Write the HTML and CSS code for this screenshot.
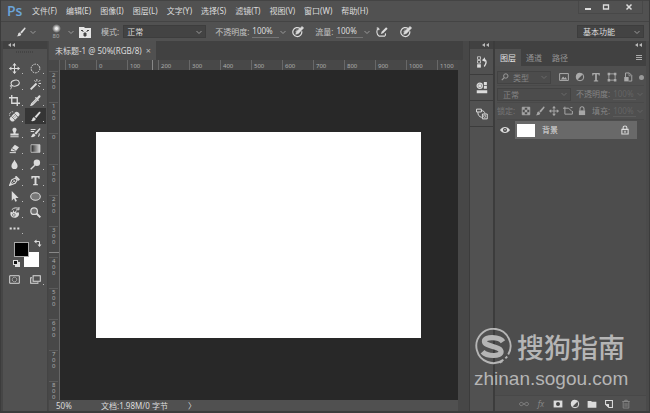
FILE: index.html
```html
<!DOCTYPE html>
<html lang="zh-CN">
<head>
<meta charset="utf-8">
<title>未标题-1 @ 50%(RGB/8)</title>
<link rel="stylesheet" href="styles.css">
</head>
<body>
<svg class="sprite" aria-hidden="true">
  <symbol id="chev" viewBox="0 0 8 8"><path d="M1.500 3 4 5.500 6.500 3" fill="none" stroke="currentColor"/></symbol>
  <symbol id="collapse" viewBox="0 0 8 6"><path d="M4 1v4L1 3zM8 1v4L5 3z" fill="currentColor"/></symbol>
  <symbol id="brush" viewBox="0 0 16 16"><path d="M14.800 1.200c.8.700.6 1.300.1 2L9.200 10.300 6.700 8.200l6.300-6.700c.6-.6 1.200-.8 1.800-.3zM6 9l2.400 2.200c0 2.800-3.400 4-7.200 3.400 2-.9 1.800-1.800 2.200-3.300C3.800 9.800 4.800 8.900 6 9z" fill="currentColor"/></symbol>
  <symbol id="panelbrush" viewBox="0 0 12 12"><path d="M0 1h5l1 1h6v10H0z" fill="#e4e4e4"/><path d="M2 4.500h2M8 4.500h2M3 4.500l1.500 1.500M9 4.500 7.500 6M5 7h2v3H5z" stroke="#444" fill="#444"/></symbol>
  <symbol id="pressure" viewBox="0 0 16 16"><path d="M11 3.500A6 6 0 1 0 13 7" fill="none" stroke="currentColor" stroke-width="1.600"/><path d="m5 11 1-3.500L13.500.500l2 2L8.500 10zM5.200 5.500h4M4.500 7.500h2" fill="currentColor" stroke="currentColor" stroke-width=".8"/></symbol>
  <symbol id="airbrush" viewBox="0 0 16 16"><path d="M3.500 3C0 5 .5 11 4 13.500h7.500c1.500-1 1.500-2.500.5-3.500M3.500 3 1 2.500M3.500 3 4 5.500" fill="none" stroke="currentColor" stroke-width="1.500"/><path d="m6.500 10.500 1-3 6-6 2 2-6 6z" fill="currentColor"/></symbol>
  <symbol id="move" viewBox="0 0 16 16"><path d="M8 1v14M1 8h14" stroke="currentColor" stroke-width="1.500"/><path d="m8 0 3 3.500H5zM8 16l3-3.500H5zM0 8l3.500-3v6zM16 8l-3.500-3v6z" fill="currentColor"/></symbol>
  <symbol id="marquee" viewBox="0 0 16 16"><circle cx="8" cy="8" r="6.300" fill="none" stroke="currentColor" stroke-width="1.400" stroke-dasharray="2.500 1.400"/></symbol>
  <symbol id="lasso" viewBox="0 0 16 16"><ellipse cx="9" cy="6" rx="6" ry="4.200" transform="rotate(-12 9 6)" fill="none" stroke="currentColor" stroke-width="1.500"/><path d="M4.500 9c-2-1-3.500 1-2 2.200C4 12 5.500 9.500 4.200 9M3 11.500c1 1 .5 2.500-1 3" fill="none" stroke="currentColor" stroke-width="1.300"/></symbol>
  <symbol id="wand" viewBox="0 0 16 16"><path d="M1 15 9.500 6.500" stroke="currentColor" stroke-width="2.800"/><path d="M10 0v3.500M12.500 4 15 1.500M12.500 6.500H16M12 9l2 2.500M6.500 2 8 4" stroke="currentColor" stroke-width="1.400"/></symbol>
  <symbol id="crop" viewBox="0 0 16 16"><path d="M4 0v12h12M0 4h12v12" fill="none" stroke="currentColor" stroke-width="1.900"/></symbol>
  <symbol id="dropper" viewBox="0 0 16 16"><path d="m9 6-6.500 6.500L1.500 15l2.300-.9L10.500 7.500" fill="none" stroke="currentColor" stroke-width="1.800"/><path d="m7 4 1.700-1 1.300 1 2-2.500c2-2.300 4.500 0 2.500 2.200L12 6l1 1.500L11.800 9.200z" fill="currentColor"/></symbol>
  <symbol id="heal" viewBox="0 0 16 16"><g transform="rotate(-45 8 8)"><rect x="0" y="4.500" width="16" height="7.500" rx="3" fill="currentColor"/><path d="M5 4.500V12M11 4.500V12" stroke="#535353"/><path d="M6.500 7h1M8.500 7h1M6.500 9.500h1M8.500 9.500h1" stroke="#535353" stroke-width="1.200"/></g><path d="M1 7C0 3 3 0 7 1.500" fill="none" stroke="currentColor" stroke-width="1.200" stroke-dasharray="1.500 1"/></symbol>
  <symbol id="stamp" viewBox="0 0 16 16"><path d="M6.500 8C6 6.500 4.800 5.500 5 3.700 5.200 0 10.800 0 11 3.700c.2 1.800-1 2.800-1.500 4.300v1.500H14v3H2v-3h4.500zM2 13.500h12V15H2z" fill="currentColor"/></symbol>
  <symbol id="history" viewBox="0 0 16 16"><path d="M15.500 3 9 11 6.500 9 14 1.500zM5.500 9.500l2.500 2.200c-.5 2.500-3.500 3.500-7 3 1.800-1 2-5 4.500-5.200z" fill="currentColor"/><path d="M1 3.500h7M1 6.500h5M13 9c1 1.500.5 3.500-1 5" fill="none" stroke="currentColor" stroke-width="1.500"/></symbol>
  <symbol id="eraser" viewBox="0 0 16 16"><path d="m8.500 2.500 6 3.500-5 6.500-7-1 1-3z" fill="currentColor"/><path d="m4 8 5.500 3" stroke="#535353" stroke-width="1.200"/><path d="M1 14h9" stroke="currentColor" stroke-width="1.500"/></symbol>
  <linearGradient id="fade"><stop stop-color="#222"/><stop offset="1" stop-color="#ddd"/></linearGradient>
  <symbol id="gradient" viewBox="0 0 16 16"><path d="M1.500 2.500h13v11h-13z" fill="url(#fade)" stroke="#ccc" stroke-width="1.200"/></symbol>
  <symbol id="drop" viewBox="0 0 16 16"><path d="M8 1c1 3 4.500 5.500 4.500 9a4.500 4.500 0 0 1-9 0C3.500 6.500 7 4 8 1z" fill="currentColor"/></symbol>
  <symbol id="dodge" viewBox="0 0 16 16"><circle cx="10" cy="5.500" r="4.700" fill="currentColor"/><path d="M7 9 1 15" stroke="currentColor" stroke-width="2"/></symbol>
  <symbol id="pen" viewBox="0 0 16 16"><path d="M1 15 4 7l5-2.500 3 3L9 12z" fill="none" stroke="currentColor" stroke-width="1.700"/><path d="m1 15 5.500-5.500M9 3l5 5 1.500-1.500-5-5z" fill="currentColor" stroke="currentColor"/><circle cx="7.500" cy="8.800" r="1.300" fill="currentColor"/></symbol>
  <symbol id="type" viewBox="0 0 16 16"><path d="M2 1.500h12V5.500h-1.500L11.800 3.500H9.400v9.700l2.100.3V15h-7v-1.500l2.100-.3V3.500H4.200L3.500 5.500H2z" fill="currentColor"/></symbol>
  <symbol id="arrow" viewBox="0 0 16 16"><path d="M4 0v14l3.200-3.200 2 4.700 2.300-1-2-4.500H14z" fill="currentColor"/></symbol>
  <symbol id="ellipse" viewBox="0 0 16 16"><ellipse cx="8" cy="8" rx="7" ry="5.500" fill="#777" stroke="currentColor" stroke-width="1.500"/></symbol>
  <symbol id="rotate" viewBox="0 0 16 16"><path d="M2 6.500 5.500 8l.5-4 2 3.500 3.500-3-1.500 4 4-1c2 4-1 8-6 8-5 0-7-4.500-5.500-9z" fill="currentColor"/><path d="M4 4C7 .5 11 1 14 2M14.500 0v4h-4" fill="none" stroke="currentColor" stroke-width="1.400"/><circle cx="7" cy="11.500" r="2" fill="none" stroke="#555"/></symbol>
  <symbol id="zoom" viewBox="0 0 16 16"><circle cx="6" cy="6" r="4.800" fill="#707070" stroke="currentColor" stroke-width="1.700"/><path d="m9.500 9.500 5.500 5.500" stroke="currentColor" stroke-width="2.800"/></symbol>
  <symbol id="dots" viewBox="0 0 16 16"><path d="M1 6.500h3v3H1zM6.500 6.500h3v3h-3zM12 6.500h3v3h-3z" fill="currentColor"/></symbol>
  <symbol id="swap" viewBox="0 0 8 8"><path d="M2 2.500h3.500V6" fill="none" stroke="currentColor"/><path d="M0 2.500 2.500.500v4zM5.500 8l-2-2.500h4z" fill="currentColor"/></symbol>
  <symbol id="mask" viewBox="0 0 16 16"><path d="M1 2.500h14v11H1z" fill="none" stroke="currentColor" stroke-width="1.400"/><circle cx="8" cy="8" r="3.300" fill="none" stroke="currentColor" stroke-width="1.200" stroke-dasharray="1.500 .8"/></symbol>
  <symbol id="screen" viewBox="0 0 16 16"><path d="M4.500 2.500H15v8H4.500z" fill="none" stroke="currentColor" stroke-width="1.500"/><path d="M3 5.500H1v8h10.500V12" fill="none" stroke="currentColor" stroke-width="1.500"/></symbol>
  <symbol id="hist-panel" viewBox="0 0 16 16"><path d="M2 1h4v3.500H2zM2 6h4v3.500H2z" fill="none" stroke="currentColor"/><path d="M1.500 11h5v4.500h-5z" fill="currentColor"/><path d="M9 5.500h3.500c2 3 .5 6-1.500 8.500" fill="none" stroke="currentColor" stroke-width="1.800"/><path d="m8 5.500 4-4v6z" fill="currentColor"/></symbol>
  <symbol id="adjust-panel" viewBox="0 0 16 16"><circle cx="5" cy="5" r="3.500" fill="none" stroke="currentColor" stroke-width="1.600"/><path d="M3 3h4v4H3zM10.500 0h4v4h-4zM10.500 5h4v4h-4zM1 11h14v4H1z" fill="currentColor"/></symbol>
  <symbol id="char-panel" viewBox="0 0 16 16"><path d="M.7 1.500h6.500v3.800H.7zM2.500 5.500c0 4 1.500 6 5 7M7 3.500c3 0 4.500 1.500 5 4M8.500 8h6.500v6.500H8.500z" fill="none" stroke="currentColor" stroke-width="1.300"/><circle cx="11.500" cy="11" r="1.500" fill="none" stroke="currentColor"/></symbol>
  <symbol id="menu" viewBox="0 0 8 8"><path d="M1 1.500h6M1 3.500h6M1 5.500h6" stroke="currentColor"/></symbol>
  <symbol id="search" viewBox="0 0 8 8"><circle cx="4.800" cy="3" r="2.200" fill="none" stroke="currentColor"/><path d="M3.200 4.600 .8 7.200" stroke="currentColor" stroke-width="1.200"/></symbol>
  <symbol id="image" viewBox="0 0 16 16"><path d="M1 2.500h14v11H1z" fill="none" stroke="currentColor" stroke-width="1.600"/><path d="m3 12 3.500-5L9 10l1.500-2 2.500 4z" fill="currentColor"/></symbol>
  <symbol id="half" viewBox="0 0 16 16"><circle cx="8" cy="8" r="6" fill="none" stroke="currentColor" stroke-width="1.600"/><path d="M12.200 3.800A6 6 0 1 0 3.800 12.200z" fill="currentColor"/></symbol>
  <symbol id="shape" viewBox="0 0 16 16"><path d="M3 3h10v10H3z" fill="none" stroke="currentColor" stroke-width="1.400"/><path d="M1 1h4v4H1zM11 1h4v4h-4zM1 11h4v4H1zM11 11h4v4h-4z" fill="currentColor"/></symbol>
  <symbol id="smart" viewBox="0 0 16 16"><path d="M4 8V1.500h6l4 4v9H9" fill="none" stroke="currentColor" stroke-width="1.500"/><path d="M2 8h7v7H2z" fill="currentColor"/><path d="M9.500 2v4h4" fill="none" stroke="currentColor"/></symbol>
  <symbol id="checker" viewBox="0 0 16 16"><path d="M2 2h12v12H2z" fill="none" stroke="currentColor" stroke-width="1.400"/><path d="M2 2h4v4H2zM10 2h4v4h-4zM6 6h4v4H6zM2 10h4v4H2zM10 10h4v4h-4z" fill="currentColor"/></symbol>
  <symbol id="artboard" viewBox="0 0 16 16"><path d="M0 3.500h9M3 1v12h12V8M9 3.500l5 5M12 2.500h3" fill="none" stroke="currentColor" stroke-width="1.600"/></symbol>
  <symbol id="lock" viewBox="0 0 16 16"><path d="M4.800 7V4.500a3.200 3.200 0 0 1 6.400 0V7" fill="none" stroke="currentColor" stroke-width="1.700"/><path d="M3 7h10v7.500H3z" fill="currentColor"/></symbol>
  <symbol id="lock-line" viewBox="0 0 16 16"><path d="M5 7V4.500a3 3 0 0 1 6 0V7M3 7h10v7.500H3z" fill="none" stroke="currentColor" stroke-width="1.700"/><path d="M7 9h2v3.500H7z" fill="currentColor"/></symbol>
  <symbol id="eye" viewBox="0 0 16 16"><path d="M0 8c4-6.500 12-6.500 16 0-4 6.500-12 6.500-16 0z" fill="currentColor"/><circle cx="8" cy="8" r="3.200" fill="#444"/><circle cx="8" cy="7.500" r="1.200" fill="currentColor"/></symbol>
  <symbol id="link" viewBox="0 0 16 16"><path d="M7 8c-1-3.500-6-3.500-6 0s5 3.500 6 0h2c1-3.500 6-3.500 6 0s-5 3.500-6 0" fill="none" stroke="currentColor" stroke-width="1.600"/></symbol>
  <symbol id="addmask" viewBox="0 0 16 16"><path d="M1 2.500h14v11H1z" fill="currentColor"/><circle cx="8" cy="8" r="3.200" fill="#444"/></symbol>
  <symbol id="folder" viewBox="0 0 16 16"><path d="M1 3h5.500L8 4.500h7V14H1z" fill="currentColor"/></symbol>
  <symbol id="newlayer" viewBox="0 0 16 16"><path d="M2.500 2.500h11v11H8l-5.500-5z" fill="none" stroke="currentColor" stroke-width="1.700"/><path d="M2 8h6v6z" fill="currentColor"/></symbol>
  <symbol id="trash" viewBox="0 0 16 16"><path d="M2 4h12M6 4V2h4v2M3.500 5v9.500h9V5M6.500 6.500v6M9.500 6.500v6" fill="none" stroke="currentColor" stroke-width="1.500"/></symbol>
</svg>

<div class="app">
  <header class="menubar">
    <span class="logo">Ps</span>
    <nav class="menus">
      <a href="#">文件(F)</a><a href="#">编辑(E)</a><a href="#">图像(I)</a><a href="#">图层(L)</a><a href="#">文字(Y)</a><a href="#">选择(S)</a><a href="#">滤镜(T)</a><a href="#">视图(V)</a><a href="#">窗口(W)</a><a href="#">帮助(H)</a>
    </nav>
    <div class="window-buttons">
      <button aria-label="最小化"><svg viewBox="0 0 8 8"><path d="M1 6h6" stroke="currentColor" stroke-width="2"/></svg></button>
      <button aria-label="最大化"><svg viewBox="0 0 8 8"><path d="M1.500 2h5v4h-5z" fill="none" stroke="currentColor" stroke-width="1.300"/></svg></button>
      <button class="close" aria-label="关闭"><svg viewBox="0 0 8 8"><path d="m1.500 1.500 5 5m0-5-5 5" stroke="currentColor" stroke-width="1.500"/></svg></button>
    </div>
  </header>

  <div class="options">
    <button class="preset" aria-label="画笔工具"><svg class="i10"><use href="#brush"/></svg><svg class="i8 dim"><use href="#chev"/></svg></button>
    <button class="tip" aria-label="画笔大小"><span class="tip-size"><i></i>80</span><svg class="i8 dim"><use href="#chev"/></svg></button>
    <button class="brush-panel" aria-label="画笔面板"><svg class="i12"><use href="#panelbrush"/></svg></button>
    <label for="mode">模式:</label>
    <span class="select mode"><select id="mode"><option>正常</option></select><svg class="i8"><use href="#chev"/></svg></span>
    <label for="opacity">不透明度:</label>
    <span class="amount"><input id="opacity" value="100%"><svg class="i8 dim"><use href="#chev"/></svg></span>
    <button aria-label="不透明度压力"><svg class="i12"><use href="#pressure"/></svg></button>
    <label class="flow" for="flow">流量:</label>
    <span class="amount"><input id="flow" value="100%"><svg class="i8 dim"><use href="#chev"/></svg></span>
    <button aria-label="喷枪"><svg class="i12"><use href="#airbrush"/></svg></button>
    <button class="size-pressure" aria-label="大小压力"><svg class="i12"><use href="#pressure"/></svg></button>
    <span class="select workspace"><select aria-label="工作区"><option>基本功能</option></select><svg class="i8"><use href="#chev"/></svg></span>
  </div>

  <main class="workspace-area">
    <aside class="tools">
      <div class="strip"><svg><use href="#collapse"/></svg></div>
      <div class="grip"></div>
      <div class="tool-grid">
        <button aria-label="移动"><svg><use href="#move"/></svg></button>
        <button aria-label="选框"><svg><use href="#marquee"/></svg></button>
        <button aria-label="套索"><svg><use href="#lasso"/></svg></button>
        <button aria-label="魔棒"><svg><use href="#wand"/></svg></button>
        <button aria-label="裁剪"><svg><use href="#crop"/></svg></button>
        <button aria-label="吸管"><svg><use href="#dropper"/></svg></button>
        <button aria-label="修复画笔"><svg><use href="#heal"/></svg></button>
        <button class="active" aria-label="画笔"><svg><use href="#brush"/></svg></button>
        <button aria-label="仿制图章"><svg><use href="#stamp"/></svg></button>
        <button aria-label="历史记录画笔"><svg><use href="#history"/></svg></button>
        <button aria-label="橡皮擦"><svg><use href="#eraser"/></svg></button>
        <button aria-label="渐变"><svg><use href="#gradient"/></svg></button>
        <button aria-label="模糊"><svg><use href="#drop"/></svg></button>
        <button aria-label="减淡"><svg><use href="#dodge"/></svg></button>
        <button aria-label="钢笔"><svg><use href="#pen"/></svg></button>
        <button aria-label="横排文字"><svg><use href="#type"/></svg></button>
        <button aria-label="路径选择"><svg><use href="#arrow"/></svg></button>
        <button aria-label="椭圆"><svg><use href="#ellipse"/></svg></button>
        <button aria-label="旋转视图"><svg><use href="#rotate"/></svg></button>
        <button class="single" aria-label="缩放"><svg><use href="#zoom"/></svg></button>
        <button aria-label="编辑工具栏"><svg><use href="#dots"/></svg></button>
      </div>
      <div class="colors">
        <button class="back" aria-label="背景色"></button>
        <button class="front" aria-label="前景色"></button>
        <button class="swap" aria-label="切换颜色"><svg class="i8"><use href="#swap"/></svg></button>
        <button class="reset" aria-label="默认颜色"></button>
      </div>
      <div class="tool-grid">
        <button class="single" aria-label="快速蒙版"><svg><use href="#mask"/></svg></button>
        <button aria-label="屏幕模式"><svg><use href="#screen"/></svg></button>
      </div>
    </aside>

    <section class="document">
      <div class="doc-tabs"><div class="doc-tab"><span>未标题-1 @ 50%(RGB/8)</span><button aria-label="关闭文档">×</button></div></div>
      <div class="editor">
        <div class="corner"></div>
        <div class="ruler-x"><span>100</span><span>0</span><span class="cursor">100</span><span>200</span><span>300</span><span>400</span><span>500</span><span>600</span><span>700</span><span>800</span><span>900</span><span>1000</span><span>1100</span></div>
        <div class="ruler-y"><span>200</span><span>100</span><span>0</span><span>100</span><span>200</span><span class="cursor">300</span><span>400</span><span>500</span><span>600</span><span>700</span><span>800</span></div>
        <div class="pasteboard"><div class="canvas"></div></div>
      </div>
      <footer class="status"><span class="percent">50%</span><span>文档:1.98M/0 字节</span><button aria-label="状态选项">〉</button></footer>
    </section>

    <aside class="dock">
      <div class="strip right"><svg><use href="#collapse"/></svg></div>
      <button aria-label="历史记录"><svg><use href="#hist-panel"/></svg></button>
      <button aria-label="调整"><svg><use href="#adjust-panel"/></svg></button>
      <button aria-label="库"><svg><use href="#char-panel"/></svg></button>
    </aside>

    <aside class="panels">
      <div class="strip right"><svg><use href="#collapse"/></svg></div>
      <div class="panel-tabs"><button class="on">图层</button><button>通道</button><button>路径</button><button class="panel-menu" aria-label="面板菜单"><svg class="i8"><use href="#menu"/></svg></button></div>
      <div class="layer-controls">
        <div class="row">
          <span class="select filter"><svg class="i8 glass"><use href="#search"/></svg><select aria-label="筛选类型" disabled><option>类型</option></select><svg class="i8"><use href="#chev"/></svg></span>
          <div class="filters">
            <button aria-label="像素图层"><svg class="i10"><use href="#image"/></svg></button>
            <button aria-label="调整图层"><svg class="i10"><use href="#half"/></svg></button>
            <button aria-label="文字图层"><svg class="i10"><use href="#type"/></svg></button>
            <button aria-label="形状图层"><svg class="i10"><use href="#shape"/></svg></button>
            <button aria-label="智能对象"><svg class="i10"><use href="#smart"/></svg></button>
            <button class="toggle" aria-label="筛选开关"></button>
          </div>
        </div>
        <div class="row">
          <span class="select blend"><select aria-label="混合模式" disabled><option>正常</option></select><svg class="i8"><use href="#chev"/></svg></span>
          <label for="lo">不透明度:</label>
          <span class="amount"><input id="lo" value="100%" disabled><svg class="i8"><use href="#chev"/></svg></span>
        </div>
        <div class="row">
          <span class="lock-label">锁定:</span>
          <div class="locks">
            <button aria-label="锁定透明像素"><svg class="i10"><use href="#checker"/></svg></button>
            <button aria-label="锁定图像像素"><svg class="i10"><use href="#brush"/></svg></button>
            <button aria-label="锁定位置"><svg class="i10"><use href="#move"/></svg></button>
            <button aria-label="锁定画板"><svg class="i10"><use href="#artboard"/></svg></button>
            <button aria-label="锁定全部"><svg class="i10"><use href="#lock"/></svg></button>
          </div>
          <label for="lf">填充:</label>
          <span class="amount"><input id="lf" value="100%" disabled><svg class="i8"><use href="#chev"/></svg></span>
        </div>
      </div>
      <div class="layers">
        <div class="layer">
          <button class="visible" aria-label="可见性"><svg class="i10"><use href="#eye"/></svg></button>
          <div class="layer-body"><span class="thumb"></span><span>背景</span><svg class="i10"><use href="#lock-line"/></svg></div>
        </div>
      </div>
      <footer class="panel-foot">
        <button class="off" aria-label="链接图层"><svg class="i10"><use href="#link"/></svg></button>
        <button class="off fx" aria-label="图层样式">fx</button>
        <button aria-label="添加蒙版"><svg class="i10"><use href="#addmask"/></svg></button>
        <button aria-label="新建调整图层"><svg class="i10"><use href="#half"/></svg></button>
        <button aria-label="新建组"><svg class="i10"><use href="#folder"/></svg></button>
        <button aria-label="新建图层"><svg class="i10"><use href="#newlayer"/></svg></button>
        <button class="off" aria-label="删除图层"><svg class="i10"><use href="#trash"/></svg></button>
      </footer>
    </aside>
  </main>

  <div class="watermark">
    <div class="brand">
      <svg viewBox="0 0 40 40" aria-hidden="true"><path d="M31 33.500A18 18 0 1 1 36 28M27 36.500l3-1.500M33 32l2-2" fill="none" stroke="currentColor" stroke-width="2"/><path d="M30.500 14.500C27 9 11 8.500 11 14c0 6 17.500 5 17.500 11 0 5.500-15 5-19.500 0" fill="none" stroke="currentColor" stroke-width="5.500"/></svg>
      <span>搜狗指南</span>
    </div>
    <div class="site">zhinan.sogou.com</div>
  </div>
</div>
</body>
</html>
```

FILE: styles.css
```css
* { box-sizing: border-box; }
body {
  margin: 0;
  font: 8px/12px "Noto Sans", "Noto Sans CJK SC", sans-serif;
  color: #dcdcdc;
  background: #383838;
}
button, input, select {
  appearance: none;
  margin: 0;
  padding: 0;
  border: 0;
  border-radius: 0;
  background: none;
  color: inherit;
  font: inherit;
}
button { display: flex; align-items: center; justify-content: center; }
a { color: inherit; text-decoration: none; }
label { white-space: nowrap; }
svg { display: block; flex: none; }
.sprite { position: absolute; width: 0; height: 0; }
.i8 { width: 8px; height: 8px; }
.i10 { width: 10px; height: 10px; }
.i12 { width: 12px; height: 12px; }
.dim { color: #999; }

.app {
  position: relative;
  display: flex;
  flex-direction: column;
  height: 100vh;
  padding: 0 1px 2px;
  background: #3c3c3c;
}

.menubar {
  display: flex;
  align-items: center;
  height: 21px;
  padding: 0 6px;
  background: #515151;
  border-top: 1px solid #444;
}
.logo { width: 25px; color: #6ba4d9; font: 600 14px/18px "Open Sans", sans-serif; }
.menus { display: flex; gap: 9px; }
.window-buttons { display: flex; align-self: flex-start; margin-left: auto; border: 1px solid #484848; border-top: 0; }
.window-buttons button { width: 18px; height: 12px; }
.window-buttons .close { width: 27px; }
.window-buttons svg { width: 8px; height: 8px; }

.options {
  display: flex;
  align-items: center;
  height: 20px;
  padding: 0 5px 0 15px;
  background: #515151;
  border-top: 1px solid #444;
}
.options label { color: #c4c4c4; }
.preset { gap: 3px; }
.tip { gap: 4px; margin-left: 12px; }
.tip-size { display: flex; flex-direction: column; align-items: center; width: 14px; font-size: 6px; line-height: 7px; color: #aaa; }
.tip-size i { width: 9px; height: 9px; border-radius: 50%; background: radial-gradient(#eee 15%, #515151 70%); }
.brush-panel { margin: 0 10px 0 4px; }
.select { display: flex; align-items: center; height: 13px; background: #434343; border: 1px solid #3d3d3d; }
.select select { flex: 1; min-width: 0; height: 11px; line-height: 11px; opacity: 1; }
.select svg { margin-right: 2px; color: #999; }
.mode { width: 83px; margin: 0 9px 0 4px; padding-left: 3px; }
.amount { display: flex; align-items: center; width: 35px; margin-left: 3px; }
.amount input { flex: 1; width: 24px; height: 12px; border-bottom: 1px solid #737373; }
.options .amount { margin-right: 5px; }
.flow { margin-left: 11px; }
.size-pressure { margin-left: 12px; }
.workspace { width: 67px; margin-left: auto; padding-left: 5px; }

.workspace-area { flex: 1; display: flex; min-height: 0; }
.strip { height: 8px; padding: 1px 4px; background: #414141; color: #bbb; }
.strip svg { width: 8px; height: 6px; }
.strip.right { display: flex; justify-content: flex-end; }

.tools { width: 47px; background: #515151; border-right: 1px solid #444; border-left: 2px solid #464646; }
.grip { width: 18px; height: 2px; margin: 2px auto 7px; background: repeating-linear-gradient(90deg, #444 0 1px, #515151 1px 2px); }
.tool-grid { display: grid; grid-template-columns: 21px 21px; padding-left: 1px; }
.tool-grid button { position: relative; height: 16px; }
.tool-grid svg { width: 11px; height: 11px; }
.tool-grid button:not(.single)::after { content: ""; position: absolute; right: 2px; bottom: 2px; width: 1px; height: 1px; background: #bbb; }
.tool-grid .active { background: #353535; }
.colors { position: relative; width: 30px; height: 32px; margin: 3px 0 0 9px; }
.colors button { position: absolute; }
.colors .front { left: 2px; top: 3px; width: 15px; height: 15px; background: #000; border: 1px solid #aaa; }
.colors .back { left: 12px; top: 13px; width: 15px; height: 15px; background: #fff; }
.colors .swap { right: 0; top: 0; }
.colors .reset { left: 1px; bottom: 6px; width: 5px; height: 5px; background: #111; border: 1px solid #ddd; box-shadow: 2px 2px #ddd; }

.document { flex: 1; display: flex; flex-direction: column; min-width: 0; padding: 0 11px 0 1px; background: #474747; }
.doc-tabs { height: 19px; margin-right: -5px; background: #414141; }
.doc-tab { display: flex; align-items: center; width: max-content; height: 19px; padding: 0 5px 0 6px; gap: 4px; background: #505050; }
.doc-tab button { font-size: 9px; color: #bbb; }
.editor { flex: 1; min-height: 0; display: grid; grid-template: 10px 1fr / 11px 1fr; overflow: hidden; }
.corner, .ruler-x, .ruler-y { background: #484848; }
.corner { border-right: 1px solid #606060; }
.ruler-x, .ruler-y { display: flex; overflow: hidden; color: #adadad; font-size: 6px; line-height: 6px; }
.ruler-x { padding-left: 5px; }
.ruler-x span { position: relative; flex: none; width: 31px; height: 10px; padding: 3px 0 0 2px; border-left: 1px solid #686868; }
.ruler-x .cursor::after { content: ""; position: absolute; right: 5px; top: 0; width: 1px; height: 10px; background: #888; }
.ruler-y { flex-direction: column; padding-top: 1px; border-right: 1px solid #666; }
.ruler-y span { position: relative; flex: none; width: 9px; height: 31px; padding: 0 3px; border-top: 1px solid #5c5c5c; word-break: break-all; }
.ruler-y span:last-child { height: 20px; }
.ruler-y .cursor::after { content: ""; position: absolute; left: 0; bottom: 4px; width: 11px; height: 1px; background: #888; }
.pasteboard { background: #282828; padding: 62px 37px 62px 36px; }
.canvas { height: 100%; background: #fff; }
.status { display: flex; align-items: center; height: 11px; background: #505050; }
.status .percent { width: 52px; padding-left: 7px; }
.status button { margin-left: 20px; }

.dock { width: 25px; background: #515151; border-left: 1px solid #3c3c3c; border-right: 1px solid #3c3c3c; }
.dock button { width: 100%; height: 26px; border-bottom: 1px solid #3c3c3c; }
.dock button svg { width: 12px; height: 12px; }

.panels { width: 154px; display: flex; flex-direction: column; margin-left: 1px; border-right: 3px solid #4a4a4a; background: #4f4f4f; }
.panel-tabs { display: flex; height: 17px; background: #414141; color: #949494; }
.panel-tabs button { width: 26px; }
.panel-tabs .on { background: #505050; color: #e0e0e0; }
.panel-tabs .panel-menu { width: 14px; margin-left: auto; color: #aaa; }
.layer-controls { padding: 3px 2px 0; color: #858585; }
.row { display: flex; align-items: center; height: 17px; border-bottom: 1px solid #494949; }
.row .select { background: #4c4c4c; border-color: #434343; }
.row .select svg { color: #6a6a6a; }
.filter { width: 54px; }
.filter select { padding-left: 1px; }
.row .filter .glass { color: #999; margin: 0 3px; }
.filters { flex: 1; display: flex; align-items: center; justify-content: space-between; padding-left: 8px; color: #aaa; }
.filters .toggle { width: 5px; height: 5px; border-radius: 50%; background: #999; }
.blend { width: 74px; padding-left: 5px; margin-right: 5px; }
.row .amount { flex: 1; min-width: 0; color: #646464; }
.row .amount input { min-width: 0; border-color: #5c5c5c; }
.lock-label { width: 24px; color: #777; }
.locks { display: flex; gap: 4px; margin-right: 5px; color: #a6a6a6; }
.layers { flex: 1; background: #4d4d4d; padding-top: 1px; }
.layer { display: flex; height: 18px; }
.visible { width: 20px; }
.layer-body { flex: 1; display: flex; align-items: center; gap: 7px; margin-right: 9px; padding: 0 7px 0 2px; background: #696969; }
.thumb { width: 18px; height: 13px; background: #fff; }
.layer-body svg { margin-left: auto; }
.panel-foot { display: flex; align-items: center; justify-content: flex-end; gap: 7px; height: 16px; padding-right: 15px; background: #505050; border-top: 1px solid #484848; }
.off { color: #858585; }
.fx { width: 10px; font-style: italic; }

.watermark { position: absolute; right: 24px; bottom: 22px; width: 152px; color: #b5b5b5; }
.brand { display: flex; align-items: center; gap: 5px; font: 500 27px/40px "Noto Sans CJK SC", sans-serif; }
.brand svg { width: 38px; height: 38px; }
.site { font: 19px/24px "Liberation Sans", sans-serif; }
```
